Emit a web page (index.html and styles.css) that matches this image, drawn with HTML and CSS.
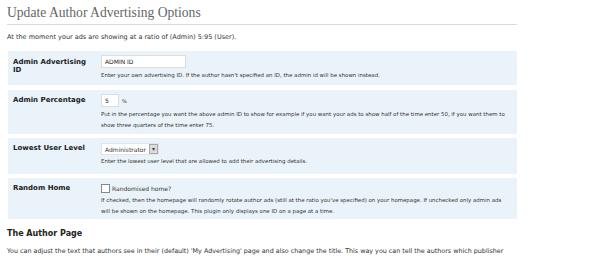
FILE: index.html
```html
<!DOCTYPE html>
<html lang="en">
<head>
  <meta charset="UTF-8">
  <title>Update Author Advertising Options</title>
  <link rel="stylesheet" href="styles.css">
</head>
<body>
  <div class="wrap">
    <h2>Update Author Advertising Options</h2>
    <p class="intro">At the moment your ads are showing at a ratio of (Admin) 5:95 (User).</p>

    <div class="form-table">
      <div class="row row-id">
        <div class="label">Admin Advertising ID</div>
        <div class="field">
          <input type="text" class="text-id" value="ADMIN ID">
          <div class="desc">Enter your own advertising ID. If the author hasn't specified an ID, the admin id will be shown instead.</div>
        </div>
      </div>

      <div class="row row-pct">
        <div class="label">Admin Percentage</div>
        <div class="field">
          <div class="inline"><input type="text" class="text-pct" value="5"> <span class="unit">%</span></div>
          <div class="desc">Put in the percentage you want the above admin ID to show for example if you want your ads to show half of the time enter 50, if you want them to show three quarters of the time enter 75.</div>
        </div>
      </div>

      <div class="row row-level">
        <div class="label">Lowest User Level</div>
        <div class="field">
          <span class="select">Administrator <span class="arrow">&#x25BE;</span></span>
          <div class="desc">Enter the lowest user level that are allowed to add their advertising details.</div>
        </div>
      </div>

      <div class="row row-home">
        <div class="label">Random Home</div>
        <div class="field">
          <label class="check"><span class="box"></span> Randomised home?</label>
          <div class="desc">If checked, then the homepage will randomly rotate author ads (still at the ratio you've specified) on your homepage. If unchecked only admin ads will be shown on the homepage. This plugin only displays one ID on a page at a time.</div>
        </div>
      </div>
    </div>

    <h3>The Author Page</h3>
    <p class="intro last">You can adjust the text that authors see in their (default) 'My Advertising' page and also change the title. This way you can tell the authors which publisher</p>
  </div>
</body>
</html>
```

FILE: styles.css
```css
body {
  margin: 0;
  font-family: "DejaVu Sans", Verdana, sans-serif;
  color: #333;
  background: #fff;
}

.wrap {
  width: 510px;
  padding: 0 0 0 7px;
}

h2 {
  font-family: "Liberation Serif", Georgia, serif;
  font-weight: normal;
  font-size: 13.6px;
  color: #666;
  margin: 0;
  padding: 5px 0 3px;
  border-bottom: 1px solid #dadada;
}

.intro {
  font-size: 6.5px;
  line-height: 9px;
  margin: 8px 0 9px;
}

.form-table {
  display: flex;
  flex-direction: column;
  gap: 4px;
  margin-left: 1px;
}

.row {
  display: grid;
  grid-template-columns: 93px 1fr;
  background: #eaf3fa;
}

.row-id {
  margin-bottom: 1px;
}

.label {
  font-size: 7px;
  line-height: 8px;
  font-weight: bold;
  color: #222;
  padding: 7px 0 0 5px;
  width: 74px;
}

.row-pct .label,
.row-level .label,
.row-home .label {
  padding-top: 6px;
}

.field {
  display: flex;
  flex-direction: column;
  align-items: flex-start;
  padding: 4px 6px 4px 0;
}

.desc {
  font-size: 5.45px;
  line-height: 11px;
  margin-top: 2px;
  color: #333;
}

.inline {
  display: flex;
  align-items: center;
  gap: 3px;
}

input {
  font-family: "DejaVu Sans", Verdana, sans-serif;
  font-size: 6px;
  border: 1px solid #ddd;
  background: #fff;
  padding: 2px 3px;
  margin: 0;
  height: 13px;
  box-sizing: border-box;
  color: #222;
}

.text-id { width: 85px; }
.text-pct { width: 18px; }

.unit { font-size: 5px; }

.row-pct .field {
  padding-bottom: 3px;
}

.row-level .field {
  padding-top: 5px;
  padding-bottom: 7px;
}

.row-level .desc {
  margin-top: 1px;
}

.select {
  display: flex;
  align-items: center;
  gap: 3px;
  font-size: 6px;
  background: #fff;
  border: 1px solid #e4e4e4;
  padding: 0 0 0 3px;
  height: 12px;
  box-sizing: border-box;
}

.arrow {
  display: block;
  width: 7px;
  height: 8px;
  line-height: 8px;
  text-align: center;
  font-size: 6px;
  background: #dcdcdc;
  border: 1px solid #aaa;
  color: #444;
}

.row-home .field {
  padding-top: 6px;
  padding-bottom: 2px;
}

.check {
  display: flex;
  align-items: center;
  gap: 2px;
  height: 9px;
  font-size: 6px;
}

.box {
  width: 7px;
  height: 7px;
  border: 1px solid #888;
  background: #fff;
}

h3 {
  font-size: 8px;
  font-weight: bold;
  margin: 10px 0 0;
  color: #222;
}

.last {
  font-size: 6.38px;
  margin-top: 9px;
}
```
